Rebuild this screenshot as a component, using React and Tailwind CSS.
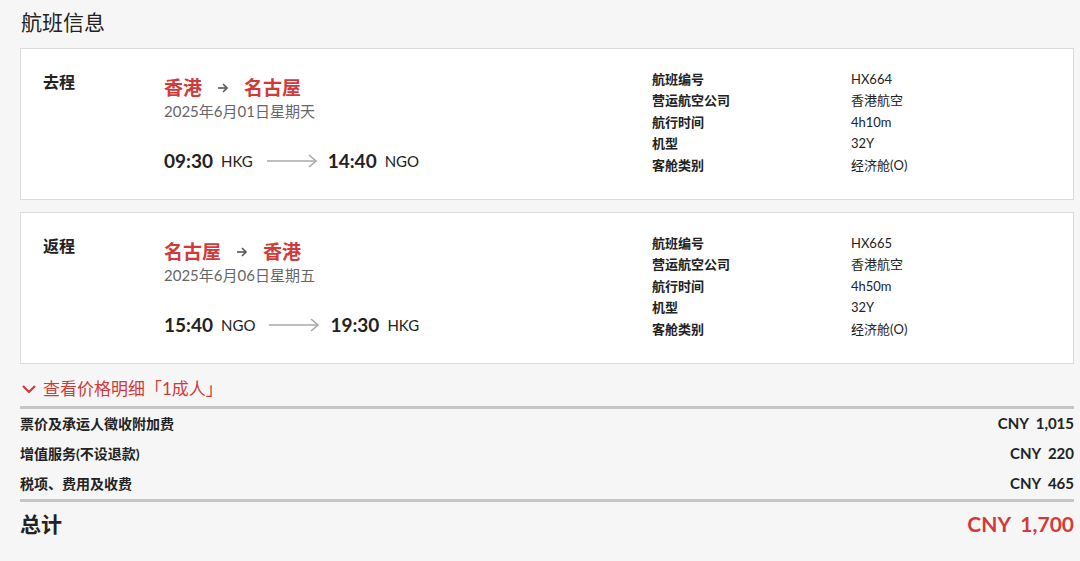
import React from "react";

const font = { fontFamily: "Lato, 'Noto Sans CJK SC', sans-serif" };

function LongArrow() {
  return (
    <svg width="51" height="14" viewBox="0 0 51 14" className="ml-[14px] mr-[10px]">
      <line x1="0" y1="7" x2="49" y2="7" stroke="#a8a8a8" strokeWidth="1.6" />
      <polyline points="42,1 49,7 42,13" fill="none" stroke="#a8a8a8" strokeWidth="1.6" />
    </svg>
  );
}

function SmallArrow() {
  return (
    <svg width="12" height="12" viewBox="0 0 12 12" className="mx-[15px]">
      <line x1="1" y1="6" x2="10" y2="6" stroke="#555" strokeWidth="1.6" />
      <polyline points="6,2 10,6 6,10" fill="none" stroke="#555" strokeWidth="1.6" />
    </svg>
  );
}

function FlightCard({ label, from, to, date, dep, depCode, arr, arrCode, no, dur }) {
  const rows = [
    ["航班编号", no],
    ["营运航空公司", "香港航空"],
    ["航行时间", dur],
    ["机型", "32Y"],
    ["客舱类别", "经济舱(O)"],
  ];
  return (
    <div className="flex bg-white border border-[#dcdcdc] h-[152px] pl-[22px] pt-[20px]">
      <div className="w-[121px] text-[16px] font-bold text-[#222] leading-[24px] pt-[1px]">{label}</div>
      <div className="w-[488px] flex flex-col">
        <div className="flex items-center text-[19px] font-bold text-[#d23a3a] leading-[26px] mt-[6px]">
          <span>{from}</span>
          <SmallArrow />
          <span>{to}</span>
        </div>
        <div className="text-[15px] text-[#666] leading-[20px] mt-[0px]">{date}</div>
        <div className="flex items-center mt-[27px] text-[#222] leading-[26px]">
          <span className="text-[19px] font-bold">{dep}</span>
          <span className="text-[15px] ml-[8px]">{depCode}</span>
          <LongArrow />
          <span className="text-[19px] font-bold">{arr}</span>
          <span className="text-[15px] ml-[8px]">{arrCode}</span>
        </div>
      </div>
      <div className="flex flex-col">
        {rows.map(([k, v]) => (
          <div key={k} className="flex text-[13px] text-[#222] leading-[21.4px]">
            <span className="w-[199px] font-bold">{k}</span>
            <span>{v}</span>
          </div>
        ))}
      </div>
    </div>
  );
}

export default function App() {
  return (
    <div style={font} className="w-[1080px] h-[561px] bg-[#f6f6f6] pl-[20px] pr-[6px] overflow-hidden">
      <div className="pt-[8px] h-[48px] text-[21px] text-[#222] leading-[28px] pl-[1px]">航班信息</div>
      <FlightCard label="去程" from="香港" to="名古屋" date="2025年6月01日星期天" dep="09:30" depCode="HKG" arr="14:40" arrCode="NGO" no="HX664" dur="4h10m" />
      <div className="h-[12px]" />
      <FlightCard label="返程" from="名古屋" to="香港" date="2025年6月06日星期五" dep="15:40" depCode="NGO" arr="19:30" arrCode="HKG" no="HX665" dur="4h50m" />
      <div className="flex items-center h-[42px] text-[17px] text-[#d23a3a] pt-[8px]">
        <svg width="16" height="10" viewBox="0 0 16 10" className="ml-[1px] mr-[6px]">
          <polyline points="2,2 8,8 14,2" fill="none" stroke="#d23a3a" strokeWidth="2.2" />
        </svg>
        <span>查看价格明细「1成人」</span>
      </div>
      <div className="border-t-[3px] border-[#c6c6c6]" />
      {[
        ["票价及承运人徵收附加费", "CNY 1,015"],
        ["增值服务(不设退款)", "CNY 220"],
        ["税项、费用及收费", "CNY 465"],
      ].map(([k, v]) => (
        <div key={k} className="flex justify-between items-center h-[30px] font-bold text-[#222] pb-[2px]">
          <span className="text-[14px]">{k}</span>
          <span className="text-[15px]">{v.replace(" ", "\u00a0\u00a0")}</span>
        </div>
      ))}
      <div className="border-t-[3px] border-[#c6c6c6]" />
      <div className="flex justify-between items-center h-[44px] font-bold">
        <span className="text-[21px] text-[#222]">总计</span>
        <span className="text-[21px] text-[#d23a3a]">CNY&nbsp;&nbsp;1,700</span>
      </div>
    </div>
  );
}
